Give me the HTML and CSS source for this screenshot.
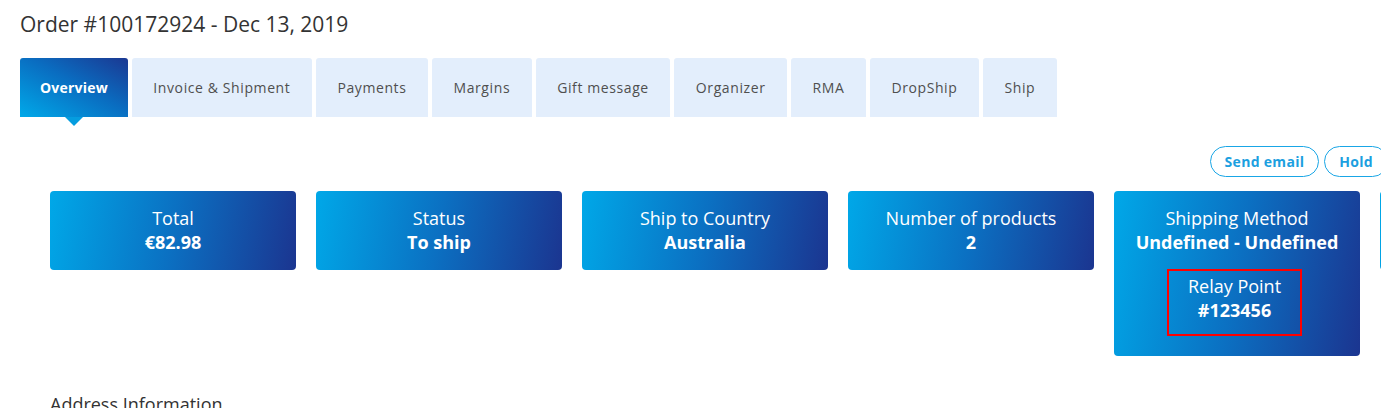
FILE: index.html
```html
<!DOCTYPE html>
<html lang="en">
<head>
<meta charset="utf-8">
<title>Order #100172924</title>
<link rel="stylesheet" href="styles.css">
</head>
<body>
<div class="page">
  <h1 class="title">Order #100172924 - Dec 13, 2019</h1>

  <nav class="tabs">
    <a class="tab active">Overview</a>
    <a class="tab">Invoice &amp; Shipment</a>
    <a class="tab">Payments</a>
    <a class="tab">Margins</a>
    <a class="tab">Gift message</a>
    <a class="tab">Organizer</a>
    <a class="tab">RMA</a>
    <a class="tab">DropShip</a>
    <a class="tab">Ship</a>
  </nav>

  <div class="actions">
    <button class="btn">Send email</button>
    <button class="btn">Hold</button>
  </div>

  <div class="cards">
    <div class="card">
      <div class="label">Total</div>
      <div class="value">€82.98</div>
    </div>
    <div class="card">
      <div class="label">Status</div>
      <div class="value">To ship</div>
    </div>
    <div class="card">
      <div class="label">Ship to Country</div>
      <div class="value">Australia</div>
    </div>
    <div class="card">
      <div class="label">Number of products</div>
      <div class="value">2</div>
    </div>
    <div class="card tall">
      <div class="label">Shipping Method</div>
      <div class="value">Undefined - Undefined</div>
      <div class="relay">
        <div class="label">Relay Point</div>
        <div class="value">#123456</div>
      </div>
    </div>
    <div class="card card-empty" aria-hidden="true"></div>
  </div>

  <h2 class="section">Address Information</h2>
</div>
</body>
</html>
```

FILE: styles.css
```css
html, body {
  margin: 0;
  padding: 0;
  background: #ffffff;
  overflow: hidden;
}

body {
  font-family: "Open Sans", "Liberation Sans", sans-serif;
  color: #333333;
}

.page {
  width: 1400px;
  padding: 0 0 0 20px;
  box-sizing: border-box;
}

.title {
  margin: 10px 0 0 0;
  font-family: "Open Sans", "Liberation Sans", sans-serif;
  font-weight: 400;
  font-size: 21px;
  line-height: 28px;
  letter-spacing: 0;
  color: #333333;
}

.tabs {
  display: flex;
  gap: 4px;
  margin-top: 20px;
}

.tab {
  position: relative;
  display: flex;
  align-items: center;
  justify-content: center;
  height: 59px;
  padding: 0 21.5px;
  background: #e3eefc;
  border-radius: 3px 3px 0 0;
  font-family: "Open Sans", "Liberation Sans", sans-serif;
  font-size: 14px;
  letter-spacing: 0.6px;
  color: #4f4f4f;
  cursor: pointer;
}

.tab.active {
  padding: 0 20px;
  background: linear-gradient(to top right, #00a9e9 0%, #0a6cc0 55%, #1b3892 100%);
  color: #ffffff;
  font-weight: 700;
  letter-spacing: 0.2px;
}

.tab.active::after {
  content: "";
  position: absolute;
  left: 50%;
  bottom: -9px;
  margin-left: -9px;
  border-left: 9px solid transparent;
  border-right: 9px solid transparent;
  border-top: 9px solid #059ddf;
}

.actions {
  display: flex;
  justify-content: flex-end;
  gap: 5px;
  margin-top: 29px;
  padding-right: 12px;
}

.btn {
  height: 31px;
  padding: 0 14px;
  background: #ffffff;
  border: 1px solid #19a6e6;
  border-radius: 16px;
  font-family: "Open Sans", "Liberation Sans", sans-serif;
  font-weight: 700;
  font-size: 14px;
  letter-spacing: 0.3px;
  color: #1c9fe0;
  cursor: pointer;
}

.cards {
  display: flex;
  align-items: flex-start;
  gap: 20px;
  margin-top: 14px;
  padding-left: 30px;
}

.card {
  flex: 0 0 246px;
  box-sizing: border-box;
  padding: 15px 8px 16px;
  border-radius: 4px;
  background: linear-gradient(100deg, #00a8e8 0%, #0b70c2 50%, #1b3590 100%);
  color: #ffffff;
  text-align: center;
  font-size: 18px;
  line-height: 24px;
}

.card-empty {
  height: 79px;
}

.card .value {
  font-weight: 700;
}

.relay {
  display: inline-block;
  margin: 15px 0 4px -5px;
  padding: 3px 19px 12px;
  border: 2px solid #ff0000;
}

.section {
  margin: 36px 0 0 30px;
  font-weight: 400;
  font-size: 18px;
  line-height: 24px;
  color: #333333;
}
```
